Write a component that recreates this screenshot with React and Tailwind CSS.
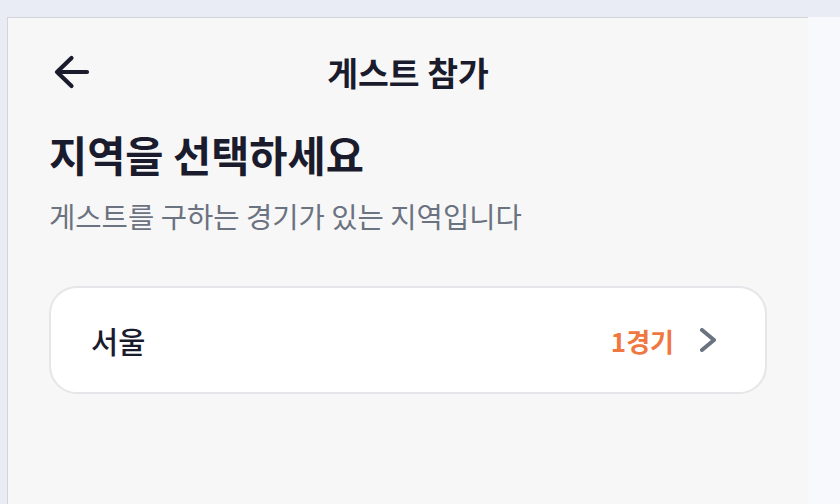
import { useState } from 'react';

const regions = [{ id: 'seoul', name: '서울', games: 1 }];

function BackArrow() {
  return (
    <svg width="40" height="40" viewBox="0 0 40 40" fill="none" stroke="currentColor" strokeWidth="4.2" strokeLinecap="round" strokeLinejoin="round">
      <path d="M19.5 6 5 20l14.5 14" />
      <path d="M6 20h29" />
    </svg>
  );
}

function Chevron() {
  return (
    <svg width="16" height="24" viewBox="0 0 16 24" fill="none" stroke="currentColor" strokeWidth="4" strokeLinecap="round" strokeLinejoin="round">
      <path d="m2 2 12 10L2 22" />
    </svg>
  );
}

export default function App() {
  const [selected, setSelected] = useState(null);

  return (
    <div className="h-[504px] w-full bg-[#e9ecf4] pt-[17px] pl-[7px] flex font-['Noto_Sans_CJK_KR','Noto_Sans',sans-serif]">
      <main className="w-[801px] h-full bg-[#f7f7f7] border-l border-t border-[#d3d5db] flex flex-col">
        <header className="h-[108px] grid grid-cols-[1fr_auto_1fr] items-center px-[44px]">
          <button type="button" className="text-[#1a1b2d] w-10 h-10 justify-self-start">
            <BackArrow />
          </button>
          <h1 className="text-[33.5px] font-bold text-[#1a1b2d] leading-none">게스트 참가</h1>
          <div />
        </header>

        <div className="px-[41px] flex flex-col">
          <h2 className="mt-[4px] text-[41.5px] leading-[48px] font-bold text-[#1a1b2d]">지역을 선택하세요</h2>
          <p className="mt-[19px] text-[28.6px] leading-[38px] text-[#6b7280]">게스트를 구하는 경기가 있는 지역입니다</p>

          <div className="mt-[51px] flex flex-col gap-4">
            {regions.map((r) => (
              <button
                key={r.id}
                type="button"
                onClick={() => setSelected(r.id)}
                className={`h-[108px] w-full rounded-[28px] border-2 bg-white flex items-center justify-between pl-[40px] pr-[49px] text-left ${
                  selected === r.id ? 'border-[#f0773f]' : 'border-[#e6e6ea]'
                }`}
              >
                <span className="text-[29.5px] font-medium text-[#1a1b2d]">{r.name}</span>
                <span className="flex items-center gap-[26px]">
                  <span className="text-[26px] font-bold text-[#f0773f]">{r.games}경기</span>
                  <span className="text-[#6b7280]">
                    <Chevron />
                  </span>
                </span>
              </button>
            ))}
          </div>
        </div>
      </main>
      <div className="flex-1 bg-[#f8f9fc]" />
    </div>
  );
}
